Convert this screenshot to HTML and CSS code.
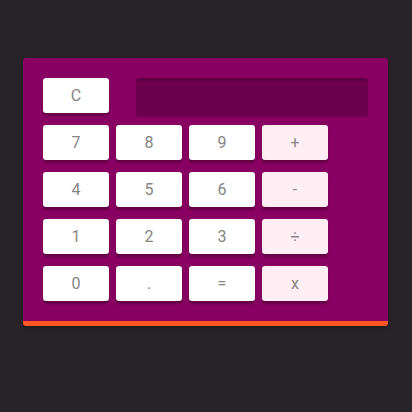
FILE: index.html
```html
<!DOCTYPE html>
<html>
<head>
<meta charset="utf-8">
<link rel="stylesheet" href="styles.css">
</head>
<body>
<div class="page">
  <div class="calc">
    <div class="top">
      <button class="key">C</button>
      <div class="screen"></div>
    </div>
    <div class="keys">
      <button class="key">7</button>
      <button class="key">8</button>
      <button class="key">9</button>
      <button class="key op">+</button>
      <button class="key">4</button>
      <button class="key">5</button>
      <button class="key">6</button>
      <button class="key op">-</button>
      <button class="key">1</button>
      <button class="key">2</button>
      <button class="key">3</button>
      <button class="key op">÷</button>
      <button class="key">0</button>
      <button class="key">.</button>
      <button class="key">=</button>
      <button class="key op">x</button>
    </div>
  </div>
</div>
</body>
</html>
```

FILE: styles.css
```css
html, body {
  margin: 0;
  padding: 0;
  background: #282328;
  height: 100%;
}
.page {
  padding: 58px 24px 0 23px;
}
.calc {
  width: 325px;
  background: #880061;
  border-radius: 3px;
  border-bottom: 5px solid #ff5722;
  padding: 20px 20px 20px 20px;
  box-shadow: 0 2px 3px rgba(0,0,0,0.25);
}
.top {
  display: flex;
  align-items: flex-start;
  height: 35px;
  margin-bottom: 12px;
}
.screen {
  flex: 1;
  margin-left: 27px;
  height: 39px;
  background: #6d004e;
  border-radius: 3px;
  box-shadow: inset 0 3px 2px rgba(0,0,0,0.12);
}
.keys {
  display: grid;
  grid-template-columns: repeat(4, 66px);
  column-gap: 7px;
  row-gap: 12px;
}
.key {
  width: 66px;
  height: 35px;
  border: none;
  border-radius: 3px;
  background: #ffffff;
  color: #858585;
  font-family: Roboto, "Liberation Sans", sans-serif;
  font-size: 16px;
  padding: 0;
  margin: 0;
  box-shadow: 0 3px 2px rgba(60,0,40,0.45);
}
.key.op {
  background: #ffeff4;
}
```
